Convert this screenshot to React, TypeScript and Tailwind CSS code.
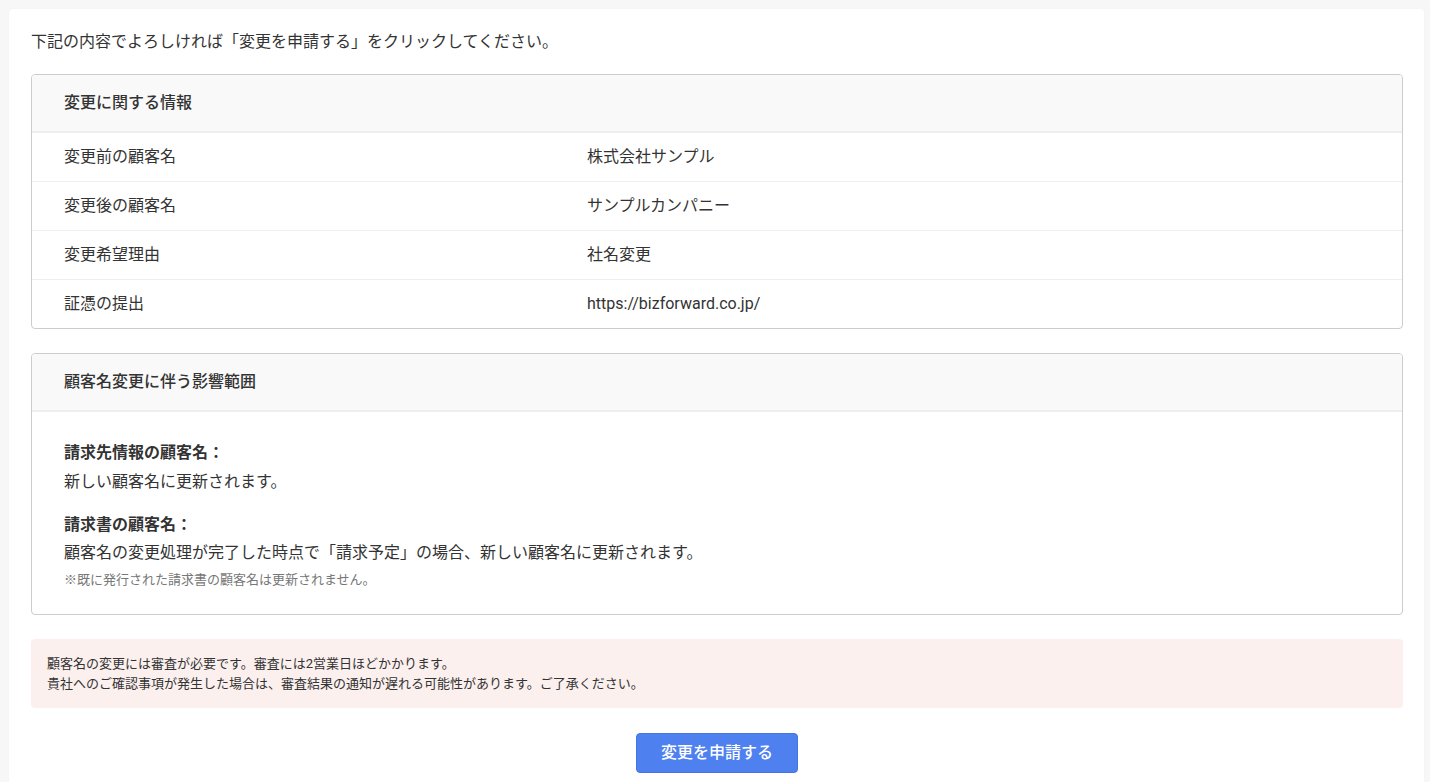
import React from "react";

const rows: [string, string][] = [
  ["変更前の顧客名", "株式会社サンプル"],
  ["変更後の顧客名", "サンプルカンパニー"],
  ["変更希望理由", "社名変更"],
  ["証憑の提出", "https://bizforward.co.jp/"],
];

export default function App() {
  return (
    <div className="min-h-[782px] bg-[#f7f7f7] pl-[9px] pr-[6px] pt-[9px] font-['Roboto','Noto_Sans_CJK_JP',sans-serif] text-[#333]">
      <div className="min-h-[773px] rounded-t-[4px] bg-white pl-[22px] pr-[21px] pt-[21px] pb-[20px] shadow-[0_0_2px_rgba(0,0,0,0.04)]">
        <p className="text-[16px] leading-[24px]">
          下記の内容でよろしければ「変更を申請する」をクリックしてください。
        </p>

        <div className="mt-[20px] overflow-hidden rounded-[4px] border border-[#cccccc]">
          <div className="flex h-[58px] items-center border-b-2 border-[#eeeeee] bg-[#f9f9f9] pl-[32px] text-[16px] font-medium">
            変更に関する情報
          </div>
          {rows.map(([k, v], i) => (
            <div
              key={k}
              className={`flex h-[48px] items-center text-[16px] ${
                i < rows.length - 1 ? "box-content border-b border-[#eeeeee]" : ""
              }`}
            >
              <div className="w-[523px] shrink-0 pl-[32px]">{k}</div>
              <div className="pl-[32px]">{v}</div>
            </div>
          ))}
        </div>

        <div className="mt-[24px] overflow-hidden rounded-[4px] border border-[#cccccc]">
          <div className="flex h-[58px] items-center border-b-2 border-[#eeeeee] bg-[#f9f9f9] pl-[32px] text-[16px] font-medium">
            顧客名変更に伴う影響範囲
          </div>
          <div className="px-[32px] pt-[27px] pb-[24px] text-[16px] leading-[28px]">
            <p className="font-bold">請求先情報の顧客名：</p>
            <p className="mt-[1px]">新しい顧客名に更新されます。</p>
            <p className="mt-[15px] font-bold">請求書の顧客名：</p>
            <p>顧客名の変更処理が完了した時点で「請求予定」の場合、新しい顧客名に更新されます。</p>
            <p className="mt-[3px] text-[13px] leading-[20px] text-[#777]">
              ※既に発行された請求書の顧客名は更新されません。
            </p>
          </div>
        </div>

        <div className="mt-[24px] rounded-[4px] bg-[#fbf0ee] px-[16px] pt-[15px] pb-[14px] text-[13px] leading-[20px]">
          <p>顧客名の変更には審査が必要です。審査には2営業日ほどかかります。</p>
          <p>貴社へのご確認事項が発生した場合は、審査結果の通知が遅れる可能性があります。ご了承ください。</p>
        </div>

        <div className="mt-[25px] flex justify-center">
          <button className="flex h-[40px] w-[162px] items-center justify-center rounded-[4px] border border-[#4475e0] bg-[#4e80ef] text-[16px] font-medium text-white">
            変更を申請する
          </button>
        </div>
      </div>
    </div>
  );
}
